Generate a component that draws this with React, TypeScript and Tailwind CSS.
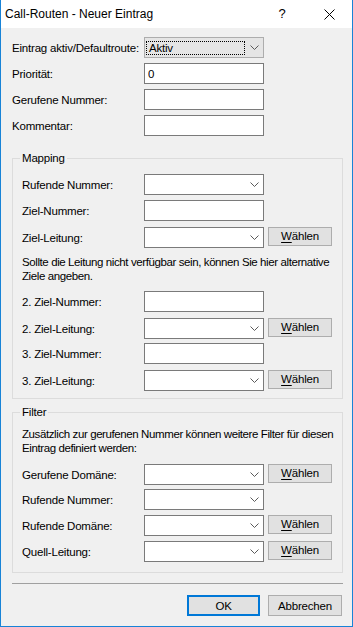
import React from "react";

function Chevron() {
  return (
    <svg width="9" height="5" viewBox="0 0 9 5" className="shrink-0">
      <path d="M0.5 0.5 L4.5 4.5 L8.5 0.5" fill="none" stroke="#5a5a5a" strokeWidth="1" />
    </svg>
  );
}

function Combo() {
  return (
    <div className="flex h-[21px] w-[120px] items-center justify-end border border-[#7a7a7a] bg-white pr-[4px]">
      <Chevron />
    </div>
  );
}

function Input({ value }: { value?: string }) {
  return (
    <div className="flex h-[21px] w-[120px] items-center border border-[#7a7a7a] bg-white pl-[3px]">
      {value}
    </div>
  );
}

function Waehlen() {
  return (
    <button className="ml-[4px] h-[19px] w-[64px] self-start border border-[#adadad] bg-[#e1e1e1] text-center leading-[17px]">
      <span className="underline underline-offset-[2px]">W</span>ählen
    </button>
  );
}

function Row({
  label,
  children,
  wide,
  className,
}: {
  label: string;
  children: React.ReactNode;
  wide?: boolean;
  className?: string;
}) {
  return (
    <div className={"flex h-[21px] items-center " + (className ?? "")}>
      <div className={wide ? "w-[132px] shrink-0 whitespace-nowrap" : "w-[122px] shrink-0 whitespace-nowrap"}>{label}</div>
      {children}
    </div>
  );
}

export default function App() {
  return (
    <div className="flex h-[627px] w-[353px] flex-col border-x border-b border-[#1883d7] bg-[#f0f0f0] font-['Liberation_Sans',Arial,sans-serif] text-[11.5px] leading-[14px] tracking-[-0.2px] text-black">
      <div className="flex h-[28px] shrink-0 items-center bg-white pl-[4px] text-[12px] tracking-normal">
        <div className="flex-1">Call-Routen - Neuer Eintrag</div>
        <div className="w-[10px] text-center text-[13px]">?</div>
        <div className="ml-[37px] mr-[17px] flex items-center">
          <svg width="11" height="11" viewBox="0 0 11 11">
            <path d="M0.5 0.5 L10.5 10.5 M10.5 0.5 L0.5 10.5" stroke="#000" strokeWidth="1" fill="none" />
          </svg>
        </div>
      </div>

      <div className="flex flex-1 flex-col">
        <div className="flex flex-col gap-[5px] pl-[11px] pt-[9px]">
          <Row label="Eintrag aktiv/Defaultroute:" wide>
            <div className="flex h-[21px] w-[120px] items-center border border-[#adadad] bg-[#e5e5e5] pl-[1px] pr-[4px]">
              <div className="flex h-[14px] w-[99px] items-center border border-dotted border-black pl-[2px]">Aktiv</div>
              <div className="flex flex-1 justify-end">
                <Chevron />
              </div>
            </div>
          </Row>
          <Row label="Priorität:" wide>
            <Input value="0" />
          </Row>
          <Row label="Gerufene Nummer:" wide>
            <Input />
          </Row>
          <Row label="Kommentar:" wide>
            <Input />
          </Row>
        </div>

        <fieldset className="ml-[11px] mr-[9px] mt-[15px] min-w-0 border border-[#dcdcdc] px-[9px] pb-[7px] pt-[9px]">
          <legend className="-ml-[2px] px-[2px]">Mapping</legend>
          <Row label="Rufende Nummer:">
            <Combo />
          </Row>
          <Row label="Ziel-Nummer:" className="mt-[5px]">
            <Input />
          </Row>
          <Row label="Ziel-Leitung:" className="mt-[6px]">
            <Combo />
            <Waehlen />
          </Row>
          <p className="mt-[7px] whitespace-nowrap tracking-[-0.4px]">
            Sollte die Leitung nicht verfügbar sein, können Sie hier alternative
            <br />
            Ziele angeben.
          </p>
          <Row label="2. Ziel-Nummer:" className="mt-[8px]">
            <Input />
          </Row>
          <Row label="2. Ziel-Leitung:" className="mt-[6px]">
            <Combo />
            <Waehlen />
          </Row>
          <Row label="3. Ziel-Nummer:" className="mt-[4px]">
            <Input />
          </Row>
          <Row label="3. Ziel-Leitung:" className="mt-[6px]">
            <Combo />
            <Waehlen />
          </Row>
        </fieldset>

        <fieldset className="ml-[11px] mr-[9px] mt-[6px] min-w-0 border border-[#dcdcdc] px-[9px] pb-[10px] pt-[8px]">
          <legend className="-ml-[2px] px-[2px]">Filter</legend>
          <p className="whitespace-nowrap tracking-[-0.4px]">
            Zusätzlich zur gerufenen Nummer können weitere Filter für diesen
            <br />
            Eintrag definiert werden:
          </p>
          <Row label="Gerufene Domäne:" className="mt-[9px]">
            <Combo />
            <Waehlen />
          </Row>
          <Row label="Rufende Nummer:" className="mt-[4px]">
            <Combo />
          </Row>
          <Row label="Rufende Domäne:" className="mt-[5px]">
            <Combo />
            <Waehlen />
          </Row>
          <Row label="Quell-Leitung:" className="mt-[5px]">
            <Combo />
            <Waehlen />
          </Row>
        </fieldset>

        <div className="ml-[11px] mr-[9px] mt-[10px] h-px bg-[#a0a0a0]" />

        <div className="mr-[10px] mt-[11px] flex justify-end gap-[8px]">
          <button className="h-[21px] w-[73px] border-2 border-[#0078d7] bg-[#e1e1e1] text-center">OK</button>
          <button className="h-[21px] w-[74px] border border-[#adadad] bg-[#e1e1e1] text-center">Abbrechen</button>
        </div>
      </div>
    </div>
  );
}
